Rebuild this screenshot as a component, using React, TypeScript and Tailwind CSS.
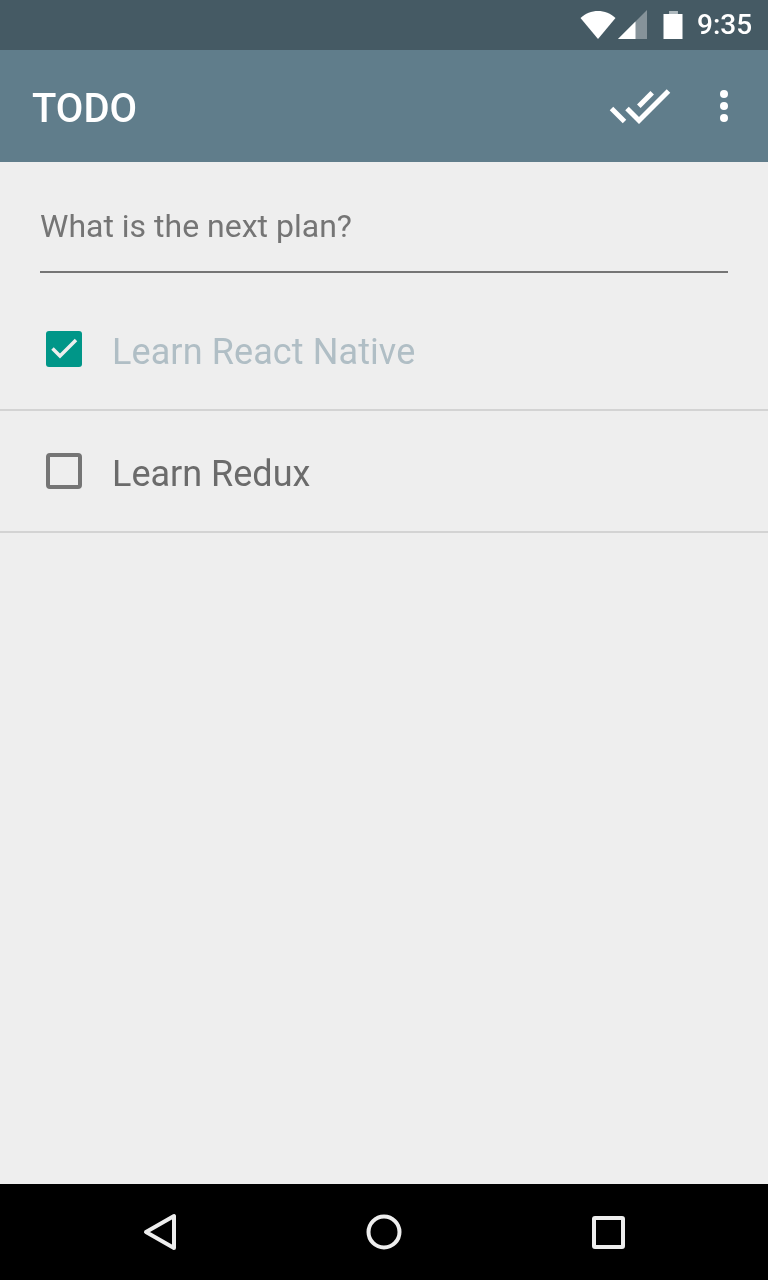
const roboto = "font-['Roboto',sans-serif] will-change-transform"

function StatusBar() {
  return (
    <div className="h-[50px] bg-[#455a64] flex items-center justify-end">
      <svg width="104" height="50" viewBox="0 0 104 50" className="shrink-0">
        {/* wifi */}
        <path d="M1.5 18 C11 8.5 27 8.5 36.5 18 L19 39 Z" fill="#ffffff" />
        {/* signal */}
        <path d="M39 39 L68 10 V39 Z" fill="#ffffff" fillOpacity="0.35" />
        <path d="M39 39 L56.5 21.5 V39 Z" fill="#ffffff" />
        {/* battery */}
        <path d="M90.5 11 H98.5 V14 H103.5 V39 H84.5 V14 H90.5 Z" fill="#ffffff" />
        <path d="M90.5 11 H98.5 V14 H90.5 Z" fill="#aeb9be" />
      </svg>
      <span className={`${roboto} text-[28px] font-medium text-white ml-[14px] mr-4 leading-none`}>9:35</span>
    </div>
  )
}

function AppBar() {
  return (
    <div className="h-[112px] bg-[#607d8b] flex items-center pl-8 pr-10">
      <span className={`${roboto} text-[40px] font-medium text-white flex-1 leading-none pt-[6px]`}>TODO</span>
      {/* done-all */}
      <svg width="64" height="44" viewBox="0 0 64 44" className="shrink-0 mt-[2px]">
        <g fill="none" stroke="#ffffff" strokeWidth="5" strokeLinecap="butt" strokeLinejoin="miter">
          <path d="M3.5 23.5 L16.5 36.5" />
          <path d="M19 23.5 L31 35.5 L60.5 6" />
          <path d="M30.8 21.2 L44.2 7.8" />
        </g>
      </svg>
      <svg width="8" height="32" viewBox="0 0 8 32" className="shrink-0 ml-[48px]">
        <circle cx="4" cy="4" r="4" fill="#ffffff" />
        <circle cx="4" cy="16" r="4" fill="#ffffff" />
        <circle cx="4" cy="28" r="4" fill="#ffffff" />
      </svg>
    </div>
  )
}

function TodoRow({ label, done }: { label: string; done: boolean }) {
  return (
    <div className="h-[122px] flex items-center pl-[46px] border-b-2 border-[#d3d3d3]">
      {done ? (
        <div className="w-9 h-9 rounded-[3px] bg-[#009688] flex items-center justify-center shrink-0">
          <svg width="36" height="36" viewBox="0 0 36 36">
            <path d="M6.5 17.5 L14 25 L30 9" fill="none" stroke="#eeeeee" strokeWidth="3.5" />
          </svg>
        </div>
      ) : (
        <div className="w-9 h-9 rounded-[4px] border-4 border-[#757575] shrink-0" />
      )}
      <span
        className={`${roboto} text-[36px] leading-none ml-[30px] pt-[6px] ${done ? "text-[#b0bec5] tracking-[0.1px]" : "text-[#6b6b6b]"}`}
      >
        {label}
      </span>
    </div>
  )
}

function NavBar() {
  return (
    <div className="h-24 bg-black flex items-center justify-center">
      <svg width="768" height="96" viewBox="0 0 768 96">
        <g fill="none" stroke="#eeeeee" strokeWidth="4" strokeLinejoin="round">
          <path d="M146 48 L174 32 V64 Z" />
          <circle cx="384" cy="48" r="15.5" />
          <rect x="594" y="34" width="29" height="29" rx="1" />
        </g>
      </svg>
    </div>
  )
}

export default function App() {
  return (
    <div className="w-[768px] h-[1280px] flex flex-col bg-[#eeeeee] overflow-hidden">
      <StatusBar />
      <AppBar />
      <div className="flex-1 flex flex-col">
        <div className="mx-10 h-[111px] border-b-2 border-[#757575] flex items-center pt-[18px]">
          <span className={`${roboto} text-[32px] leading-none text-[#757575]`}>What is the next plan?</span>
        </div>
        <div className="h-[16px]" />
        <TodoRow label="Learn React Native" done />
        <TodoRow label="Learn Redux" done={false} />
      </div>
      <NavBar />
    </div>
  )
}
